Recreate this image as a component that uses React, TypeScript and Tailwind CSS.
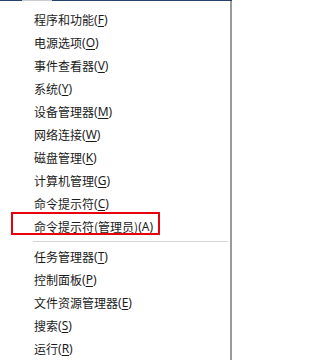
import React from "react";

type Item = { label: string; key: string; suffix?: string };

const group1: Item[] = [
  { label: "程序和功能", key: "F" },
  { label: "电源选项", key: "O" },
  { label: "事件查看器", key: "V" },
  { label: "系统", key: "Y" },
  { label: "设备管理器", key: "M" },
  { label: "网络连接", key: "W" },
  { label: "磁盘管理", key: "K" },
  { label: "计算机管理", key: "G" },
  { label: "命令提示符", key: "C" },
];

const group2: Item[] = [
  { label: "任务管理器", key: "T" },
  { label: "控制面板", key: "P" },
  { label: "文件资源管理器", key: "E" },
  { label: "搜索", key: "S" },
  { label: "运行", key: "R" },
];

function Row({ item }: { item: Item }) {
  return (
    <div className="h-[23px] pl-[34px] flex items-center text-[12px] leading-[23px] text-[#1b1b1b] whitespace-nowrap">
      <span>{item.label}</span>
      <span className="font-['Noto_Sans','Liberation_Sans',sans-serif] text-[12px]">
        (<span className="underline underline-offset-2">{item.key}</span>)
      </span>
    </div>
  );
}

export default function App() {
  return (
    <div className="w-[232px] h-[360px] bg-white flex flex-col overflow-hidden font-['Noto_Sans_CJK_SC','Noto_Sans',sans-serif]">
      <div className="flex h-[1px] shrink-0">
        <div className="w-[22px] bg-[#24446a]" />
        <div className="w-[30px] bg-[#c9ccd0]" />
        <div className="flex-1 bg-[#24446a]" />
      </div>
      <div className="flex flex-1 min-h-0">
        <div className="flex-1 flex flex-col pt-[7px]">
          {group1.map((it) => (
            <Row key={it.key} item={it} />
          ))}
          <div className="relative">
            <Row item={{ label: "命令提示符(管理员)", key: "A" }} />
            <div className="absolute left-[11px] top-[-3px] w-[149px] h-[23px] border-2 border-[#e8000b]" />
          </div>
          <div className="h-[7px] flex items-center pl-[33px] pr-[2px]">
            <div className="h-[1px] w-full bg-[#d5d5d5]" />
          </div>
          {group2.map((it) => (
            <Row key={it.key} item={it} />
          ))}
        </div>
        <div className="w-[2px] bg-[#9a9a9a]" />
      </div>
    </div>
  );
}
